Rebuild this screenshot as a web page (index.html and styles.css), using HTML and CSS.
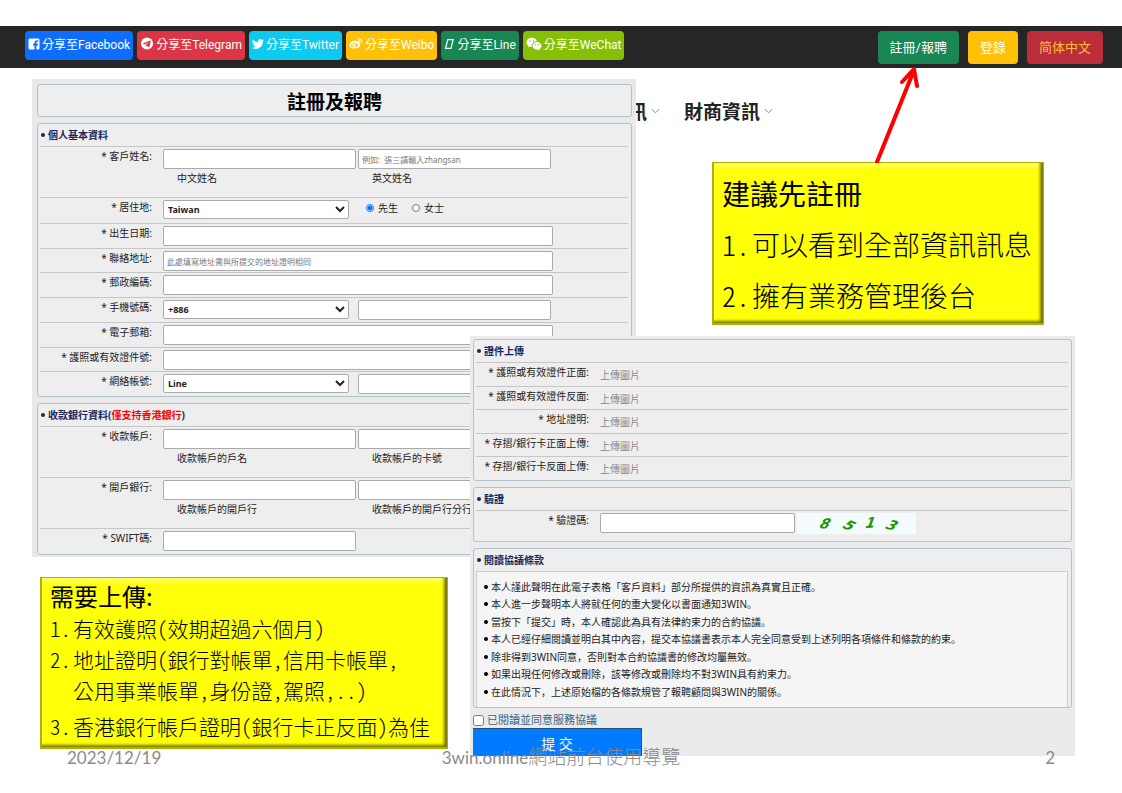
FILE: index.html
```html
<!DOCTYPE html>
<html lang="zh-Hant">
<head>
<meta charset="utf-8">
<meta name="viewport" content="width=device-width, initial-scale=1">
<title>註冊及報聘</title>
<link rel="stylesheet" href="styles.css">
</head>
<body>
<header class="topbar">
  <div class="share">
    <button class="share-btn facebook" type="button"><svg class="icon" viewBox="0 0 12 12" aria-hidden="true"><path fill="#fff" fill-rule="evenodd" d="M2 .5h8A1.500 1.500 0 0 1 11.500 2v8a1.500 1.500 0 0 1-1.500 1.500H8.400V7.400h1.400l.3-1.700H8.400V4.700c0-.6.2-.9.9-.9h.9V2.300C9.900 2.200 9.400 2.200 8.900 2.200c-1.500 0-2.400.9-2.400 2.400v1.100H5v1.700h1.500v4.100H2A1.500 1.500 0 0 1 .5 10V2A1.500 1.500 0 0 1 2 .5z"/></svg>分享至Facebook</button>
    <button class="share-btn telegram" type="button"><svg class="icon wide" viewBox="0 0 14 14" aria-hidden="true"><circle cx="7" cy="7" r="6.500" fill="#fff"/><path fill="#dc3545" d="M10.800 3.700 2.900 6.800c-.4.2-.4.5 0 .6l1.900.6 4.300-2.700L5.800 8.500l-.1 1.900 1.100-1 2 1.400c.4.2.7.1.8-.4l1.500-6.200c.1-.4 0-.6-.3-.5z"/></svg>分享至Telegram</button>
    <button class="share-btn twitter" type="button"><svg class="icon" viewBox="0 0 24 24" aria-hidden="true"><path fill="#fff" d="M24 4.600a10 10 0 0 1-2.800.8 5 5 0 0 0 2.100-2.700 10 10 0 0 1-3.100 1.200 4.900 4.900 0 0 0-8.400 4.500A14 14 0 0 1 1.700 3.100a4.900 4.900 0 0 0 1.500 6.600 4.900 4.900 0 0 1-2.200-.6 4.900 4.900 0 0 0 3.900 4.900 5 5 0 0 1-2.200.1 4.900 4.900 0 0 0 4.600 3.400A10 10 0 0 1 0 19.500 14 14 0 0 0 21.500 7.100 10 10 0 0 0 24 4.600z"/></svg>分享至Twitter</button>
    <button class="share-btn weibo" type="button"><svg class="icon wide" viewBox="0 0 16 14" aria-hidden="true"><path fill="#fff" fill-rule="evenodd" d="M6.200 4.200c1.100-.9 2.700-.8 2.300 1 1.800-.7 3.400-.3 2.900 1.200 3.200 1.200 1.600 6.200-5 6.200C2.800 12.600.5 10.900.5 9c0-2 2.500-4.800 4.600-5.100.7-.1 1 .1 1.100.3zM6 6.700c-2.300.2-4 1.400-3.900 2.700.1 1.300 2 2.200 4.300 2 2.300-.2 4-1.400 3.900-2.700C10.200 7.400 8.300 6.500 6 6.700z"/><ellipse cx="5.600" cy="9.200" rx="2" ry="1.700" fill="#fff"/><circle cx="5" cy="9.500" r=".7" fill="#ffc107"/><path fill="none" stroke="#fff" stroke-width="1.300" stroke-linecap="round" d="M10.300 1.700c3-.6 5 1.800 4.100 4.600M10.700 3.900c1.200-.2 1.900.6 1.600 1.700"/></svg>分享至Weibo</button>
    <button class="share-btn line" type="button"><svg class="icon slim" viewBox="0 0 10 12" aria-hidden="true"><path fill="none" stroke="#fff" stroke-width="1.200" d="M3.300 1.600h5.400L6.500 10.400H1.100z"/></svg>分享至Line</button>
    <button class="share-btn wechat" type="button"><svg class="icon chat" viewBox="0 0 16 14" aria-hidden="true"><path fill="#fff" d="M5.900.8C2.800.8.4 2.900.4 5.400c0 1.500.8 2.700 2.100 3.600L2 10.600l1.900-1c.7.2 1.300.3 2 .3-.8-3 1.500-5.700 5-5.700C10.500 2.200 8.300.8 5.900.8z"/><path fill="#fff" d="M11.100 4.900C8.500 4.900 6.500 6.700 6.500 8.800s2 3.900 4.600 3.900c.5 0 1-.1 1.500-.2l1.500.8-.4-1.300c1-.8 1.800-1.900 1.800-3.200 0-2.100-2-3.900-4.400-3.900z"/><g fill="#86c006"><circle cx="4.100" cy="4" r=".7"/><circle cx="7.600" cy="4" r=".7"/><circle cx="9.600" cy="7.700" r=".6"/><circle cx="12.500" cy="7.700" r=".6"/></g></svg>分享至WeChat</button>
  </div>
  <div class="account">
    <button class="account-btn register" type="button">註冊/報聘</button>
    <button class="account-btn login" type="button">登錄</button>
    <button class="account-btn language" type="button" lang="zh-Hans">简体中文</button>
  </div>
</header>

<main class="stage">
  <nav class="menu">
    <a class="menu-link" href="#news">訊<svg class="chevron" viewBox="0 0 10 6" aria-hidden="true"><path d="M1 1l4 4 4-4"/></svg></a>
    <a class="menu-link" href="#finance">財商資訊<svg class="chevron" viewBox="0 0 10 6" aria-hidden="true"><path d="M1 1l4 4 4-4"/></svg></a>
  </nav>

  <form class="panel panel-profile">
    <h1 class="box title">註冊及報聘</h1>
    <section class="box">
      <h2 class="box-head">個人基本資料</h2>
      <div class="row tall">
        <label class="label" for="cname">* 客戶姓名:</label>
        <div class="pair">
          <input class="input" id="cname" type="text">
          <input class="input" id="ename" type="text" placeholder="例如:&nbsp; 張三請輸入zhangsan">
          <label class="hint" for="cname">中文姓名</label>
          <label class="hint" for="ename">英文姓名</label>
        </div>
      </div>
      <div class="row middle">
        <label class="label" for="country">* 居住地:</label>
        <div class="fields">
          <select class="select" id="country"><option>Taiwan</option></select>
          <span class="radios">
            <label class="radio"><input type="radio" name="sex" checked>先生</label>
            <label class="radio"><input type="radio" name="sex">女士</label>
          </span>
        </div>
      </div>
      <div class="rows rows-profile">
        <div class="row"><label class="label" for="birth">* 出生日期:</label><div class="fields"><input class="input full" id="birth" type="text"></div></div>
        <div class="row"><label class="label" for="addr">* 聯絡地址:</label><div class="fields"><input class="input full" id="addr" type="text" placeholder="此處填寫地址需與所提交的地址證明相同"></div></div>
        <div class="row"><label class="label" for="zip">* 郵政編碼:</label><div class="fields"><input class="input full" id="zip" type="text"></div></div>
        <div class="row"><label class="label" for="code">* 手機號碼:</label><div class="fields"><select class="select" id="code"><option>+886</option></select><input class="input after-select" type="text" aria-label="手機號碼"></div></div>
        <div class="row"><label class="label" for="mail">* 電子郵箱:</label><div class="fields"><input class="input full" id="mail" type="text"></div></div>
        <div class="row"><label class="label" for="idno">* 護照或有效證件號:</label><div class="fields"><input class="input full" id="idno" type="text"></div></div>
        <div class="row"><label class="label" for="im">* 網絡帳號:</label><div class="fields"><select class="select" id="im"><option>Line</option></select><input class="input after-select" type="text" aria-label="網絡帳號"></div></div>
      </div>
    </section>
    <section class="box">
      <h2 class="box-head">收款銀行資料(<span class="warn">僅支持香港銀行</span>)</h2>
      <div class="row tall">
        <label class="label" for="payee">* 收款帳戶:</label>
        <div class="pair">
          <input class="input" id="payee" type="text">
          <input class="input" id="card" type="text">
          <label class="hint" for="payee">收款帳戶的戶名</label>
          <label class="hint" for="card">收款帳戶的卡號</label>
        </div>
      </div>
      <div class="row tall">
        <label class="label" for="bank">* 開戶銀行:</label>
        <div class="pair">
          <input class="input" id="bank" type="text">
          <input class="input" id="branch" type="text">
          <label class="hint" for="bank">收款帳戶的開戶行</label>
          <label class="hint" for="branch">收款帳戶的開戶行分行</label>
        </div>
      </div>
      <div class="row last-row"><label class="label" for="swift">* SWIFT碼:</label><div class="fields"><input class="input" id="swift" type="text"></div></div>
    </section>
  </form>

  <form class="panel panel-upload">
    <section class="box">
      <h2 class="box-head">證件上傳</h2>
      <div class="rows rows-upload">
        <div class="row"><span class="label">* 護照或有效證件正面:</span><a class="upload" href="#id-front">上傳圖片</a></div>
        <div class="row"><span class="label">* 護照或有效證件反面:</span><a class="upload" href="#id-back">上傳圖片</a></div>
        <div class="row"><span class="label">* 地址證明:</span><a class="upload" href="#address">上傳圖片</a></div>
        <div class="row"><span class="label">* 存摺/銀行卡正面上傳:</span><a class="upload" href="#card-front">上傳圖片</a></div>
        <div class="row"><span class="label">* 存摺/銀行卡反面上傳:</span><a class="upload" href="#card-back">上傳圖片</a></div>
      </div>
    </section>
    <section class="box">
      <h2 class="box-head">驗證</h2>
      <div class="row verify">
        <label class="label" for="captcha">* 驗證碼:</label>
        <div class="fields">
          <input class="input" id="captcha" type="text">
          <svg class="captcha" viewBox="0 0 119 21" role="img" aria-label="8513">
            <rect width="119" height="21" fill="#f3fbff"/>
            <g class="captcha-digits">
              <text transform="translate(21 15) rotate(4) skewX(-24)">8</text>
              <text transform="translate(44 14) rotate(24) skewX(-24)">5</text>
              <text transform="translate(67 15) rotate(-4) skewX(-24)">1</text>
              <text transform="translate(87 15) rotate(16) skewX(-24)">3</text>
            </g>
          </svg>
        </div>
      </div>
    </section>
    <section class="box">
      <h2 class="box-head">閱讀協議條款</h2>
      <ul class="terms" lang="zh-Hans">
        <li>本人謹此聲明在此電子表格「客戶資料」部分所提供的資訊為真實且正確。</li>
        <li>本人進一步聲明本人將就任何的重大變化以書面通知3WIN。</li>
        <li>當按下「提交」時，本人確認此為具有法律約束力的合約協議。</li>
        <li>本人已經仔細閱讀並明白其中內容，提交本協議書表示本人完全同意受到上述列明各項條件和條款的約束。</li>
        <li>除非得到3WIN同意，否則對本合約協議書的修改均屬無效。</li>
        <li>如果出現任何修改或刪除，該等修改或刪除均不對3WIN具有約束力。</li>
        <li>在此情況下，上述原始檔的各條款規管了報聘顧問與3WIN的關係。</li>
      </ul>
    </section>
    <div class="actions">
      <label class="agree"><input type="checkbox">已閱讀並同意服務協議</label>
      <button class="submit" type="submit">提 交</button>
    </div>
  </form>

  <aside class="callout callout-register">
    <svg class="arrow" viewBox="0 0 44 98" aria-hidden="true"><path d="M2 97 39 5M27 17 39 4 42 21"/></svg>
    <h2>建議先註冊</h2>
    <ol>
      <li><span class="num">1.</span>可以看到全部資訊訊息</li>
      <li><span class="num">2.</span>擁有業務管理後台</li>
    </ol>
  </aside>

  <aside class="callout callout-upload">
    <h2>需要上傳:</h2>
    <ol>
      <li><span class="num">1.</span>有效護照(效期超過六個月)</li>
      <li><span class="num">2.</span><span>地址證明(銀行對帳單,信用卡帳單,<br>公用事業帳單,身份證,駕照,..)</span></li>
      <li class="last"><span class="num">3.</span>香港銀行帳戶證明(銀行卡正反面)為佳</li>
    </ol>
  </aside>

  <footer class="footer">
    <span class="date">2023/12/19</span>
    <span class="deck">3win.online<span class="deck-name">網站前台使用導覽</span></span>
    <span class="page">2</span>
  </footer>
</main>
</body>
</html>
```
FILE: styles.css
```css
* { box-sizing: border-box; }

body {
  margin: 0;
  padding-top: 26px;
  background: #fff;
  color: #222;
  font-family: "Noto Sans", "Noto Sans CJK TC", sans-serif;
  font-size: 10px;
}

h1, h2, ol, ul { margin: 0; padding: 0; }
ol, ul { list-style: none; }
button, input, select { font-family: inherit; margin: 0; }

/* Top bar */
.topbar {
  display: flex;
  justify-content: space-between;
  align-items: flex-start;
  min-height: 42px;
  padding: 5px 19px 0 25px;
  background: #262626;
}
.share { display: flex; gap: 4px; }
.account { display: flex; gap: 9px; }
.share-btn {
  display: flex;
  align-items: center;
  gap: 2px;
  height: 29px;
  padding: 0 3px 4px;
  border: 0;
  border-radius: 4px;
  color: #fff;
  font: 12px Roboto, "Noto Sans CJK TC", sans-serif;
  white-space: nowrap;
}
.icon { width: 12px; height: 12px; }
.icon.wide { width: 14px; height: 13px; }
.icon.slim { width: 11px; height: 12px; }
.icon.chat { width: 16px; height: 14px; }
.facebook { background: #0d6efd; }
.telegram { background: #dc3545; }
.twitter { background: #0dcaf0; }
.weibo { background: #ffc107; }
.line { background: #198754; }
.wechat { background: #86c006; }
.account-btn {
  height: 33px;
  padding: 0 12px 2px;
  border: 0;
  border-radius: 4px;
  color: #fff;
  font: 13px Roboto, "Noto Sans CJK TC", sans-serif;
  white-space: nowrap;
}
.register { background: #198754; }
.login { background: #ffc107; }
.language { background: #bb2d3b; color: #ffc038; font-family: Roboto, "Noto Sans CJK SC", sans-serif; }

/* Slide canvas: overlapping cards share one grid row */
.stage {
  display: grid;
  grid-template-columns: 32fr 8fr 408fr 22fr 166fr 76fr 332fr 31fr 47fr;
  align-items: start;
  min-height: 725px;
}
.stage > * { grid-row: 1; min-width: 0; }

.menu {
  grid-column: 5 / 8;
  display: flex;
  gap: 24px;
  margin-top: 29px;
  padding-left: 158px;
}
.menu-link {
  display: flex;
  align-items: center;
  gap: 4px;
  color: #222;
  font: bold 19px/28px "Noto Sans CJK TC", sans-serif;
  text-decoration: none;
}
.chevron { width: 9px; height: 6px; fill: none; stroke: #777; }

/* Form panels */
.panel {
  display: flex;
  flex-direction: column;
  gap: 6px;
  background: #e9e9e9;
  overflow: hidden;
}
.panel-profile { grid-column: 2 / 6; margin-top: 11px; padding: 5px 4px 2px 5px; }
.panel-upload { grid-column: 5 / 9; margin-top: 268px; padding: 3px 3px 0; background: #ebebeb; }
.box {
  padding: 0 3px 0 2px;
  border: 1px solid #b3c3cd;
  border-radius: 3px;
  background: #eee;
}
.title {
  padding: 0;
  color: #000;
  font: bold 19px/31px "Noto Sans CJK TC", sans-serif;
  text-align: center;
}
.box-head {
  color: #17285c;
  font-size: 10px;
  font-weight: bold;
  line-height: 22px;
}
.box-head::before, .terms li::before {
  content: "";
  display: inline-block;
  width: 4px;
  height: 4px;
  margin: 0 3px 2px 1px;
  border-radius: 2px;
  background: currentColor;
}
.warn { color: #f00; }
.rows { display: grid; grid-auto-rows: 1fr; }
.rows-profile { min-height: 173px; }
.rows-upload { min-height: 118px; }
.row {
  display: flex;
  align-items: flex-start;
  border-top: 1px solid #c6c6c6;
}
.label {
  flex: 0 0 112px;
  margin-right: 11px;
  line-height: 18px;
  text-align: right;
  white-space: nowrap;
}
.tall { min-height: 51px; }
.middle { min-height: 26px; }
.last-row { min-height: 26px; }
.fields { display: flex; gap: 2px; padding-top: 2px; }
.pair {
  display: grid;
  grid-template-columns: 193px 193px;
  column-gap: 2px;
  align-content: start;
  padding-top: 2px;
}
.hint { padding-left: 14px; line-height: 18px; }
.input {
  width: 193px;
  height: 20px;
  padding: 0 3px;
  border: 1px solid #aaa;
  border-radius: 2px;
  background: #fff;
  font-size: 10px;
}
.input::placeholder { color: #777; font-size: 8px; }
.input.full { width: 390px; }
.select {
  width: 186px;
  height: 19px;
  border: 1px solid #aaa;
  border-radius: 2px;
  background: #fff;
  color: #222;
  font-size: 9px;
  font-weight: bold;
}
.after-select { margin-left: 7px; }
.radios { display: flex; gap: 14px; padding-left: 15px; }
.radio { display: flex; align-items: center; gap: 4px; line-height: 14px; padding-bottom: 4px; }
.radio input { width: 8px; height: 8px; }

.panel-upload .label { flex-basis: 113px; }
.upload {
  padding-top: 2px;
  color: #888;
  line-height: 20px;
  text-decoration: none;
}
.panel-upload .verify { min-height: 31px; }
.verify .input { width: 195px; }
.captcha { width: 119px; height: 21px; }
.captcha-digits {
  fill: #249300;
  font: bold 14px "DejaVu Sans", sans-serif;
}
.terms {
  display: grid;
  grid-auto-rows: 1fr;
  min-height: 136px;
  padding: 7px 0 6px 6px;
  border: 1px solid #ccc;
  border-bottom: 0;
  background: #f5f5f5;
  font-family: "Noto Sans", "Noto Sans CJK SC", sans-serif;
  white-space: nowrap;
}
.terms li { line-height: 17px; }
.terms li::before { background: #000; }
.actions { display: grid; justify-items: start; gap: 2px; }
.agree {
  display: flex;
  align-items: center;
  gap: 3px;
  color: #31658a;
  font-size: 11px;
  line-height: 12px;
}
.agree input { width: 11px; height: 11px; }
.submit {
  width: 169px;
  height: 28px;
  padding: 0;
  border: 1px solid #25507e;
  border-width: 1px 1px 0 0;
  background: #007bff;
  color: #fff;
  font-size: 14px;
}

/* Yellow bevelled notes */
.callout {
  position: relative;
  border: solid #b0b000;
  border-width: 1px 1px 2px 2px;
  background: #ffff0a;
  box-shadow: inset -3px -2px 3px #777700, inset 0 4px 4px #ffff5a;
  color: #000;
  font-family: "Noto Sans CJK TC", sans-serif;
  white-space: nowrap;
}
.callout h2 { font-weight: normal; }
.callout ol { font-weight: 300; font-feature-settings: "hwid"; }
.callout li { display: flex; }
.num { flex: none; }
.callout-register {
  grid-column: 7;
  margin-top: 94px;
  padding: 5px 8px 2px;
  font-size: 28px;
  line-height: 51px;
}
.callout-register h2 { font-size: 28px; }
.callout-register .num { width: 30px; }
.arrow {
  position: absolute;
  bottom: 100%;
  left: 49%;
  width: 44px;
  height: 98px;
  fill: none;
  stroke: #f00;
  stroke-width: 4;
  stroke-linejoin: round;
  stroke-linecap: round;
}
.callout-upload {
  grid-column: 3;
  margin-top: 509px;
  padding: 1px 8px 5px;
  font-size: 21px;
  line-height: 31px;
}
.callout-upload h2 { font-size: 24px; line-height: 34px; }
.callout-upload .num { width: 23px; }
.callout-upload .last { padding-top: 5px; }

/* Slide footer */
.footer {
  grid-column: 1 / -1;
  align-self: end;
  display: grid;
  grid-template-columns: 1fr auto 1fr;
  align-items: center;
  z-index: 1;
  margin-bottom: 21px;
  padding: 0 67px;
  color: #8a8a8a;
  font: 17px/28px Lato, "Noto Sans CJK TC", sans-serif;
}
.deck-name { font-size: 19px; font-weight: 300; }
.page { text-align: right; }
```
